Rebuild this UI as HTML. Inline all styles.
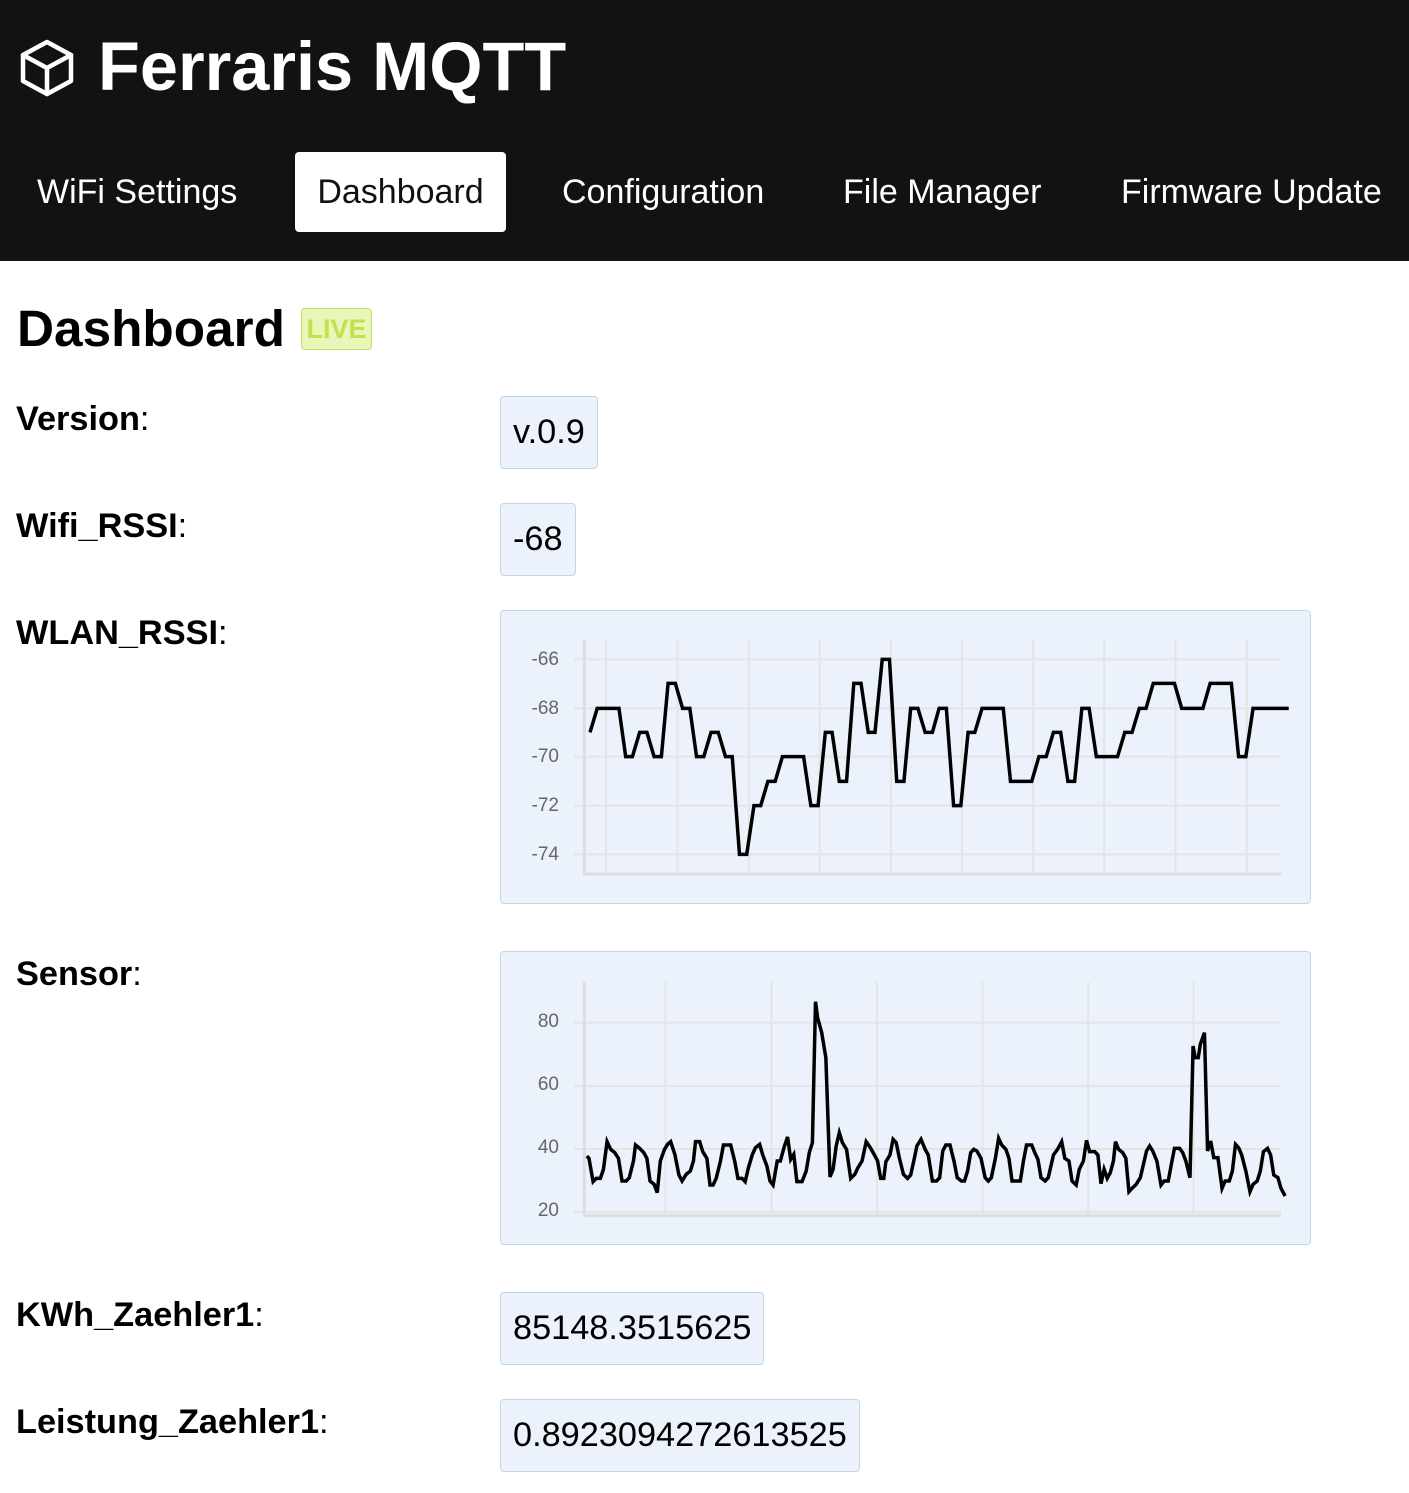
<!DOCTYPE html>
<html><head><meta charset="utf-8"><style>
*{margin:0;padding:0;box-sizing:border-box}
body{width:1409px;height:1493px;background:#fff;font-family:"Liberation Sans",sans-serif;position:relative;overflow:hidden;color:#000}
.hdr{position:absolute;left:0;top:0;width:1409px;height:261px;background:#121212}
.title{position:absolute;left:98px;top:27px;font-size:68.5px;font-weight:bold;color:#fff;line-height:80px}
.nav{position:absolute;top:152px;height:80px;line-height:80px;font-size:34px;color:#fff;white-space:nowrap}
.tab{background:#fff;color:#111;border-radius:4px;text-align:center}
h1{position:absolute;left:17px;top:300px;font-size:51.3px;font-weight:bold;line-height:58px}
.live{position:absolute;left:301px;top:308px;width:71px;height:42px;background:#e6f8b7;border:1px solid #c4e26a;border-radius:4px;color:#c4e04e;font-weight:bold;font-size:27px;line-height:40px;text-align:center}
.lbl{position:absolute;left:16px;font-size:34.3px;line-height:40px}
.lbl b{font-weight:bold}
.val{position:absolute;left:500px;height:73px;background:#ecf2fc;border:1px solid #c3d5e6;border-radius:4px;font-size:34.3px;line-height:71px;padding:0 12px}
.chart{position:absolute;left:500px;width:811px;height:294px;background:#ecf2fc;border:1px solid #c3d5e6;border-radius:4px}
.ax{position:absolute;font-size:19px;color:#666;width:58px;text-align:right}
</style></head><body>
<div class="hdr">
<svg style="position:absolute;left:20px;top:39px" width="54" height="58" viewBox="0 0 54 58" fill="none" stroke="#fff" stroke-width="4.5" stroke-linejoin="round" stroke-linecap="round">
<path d="M27 3 L51 16 L51 42 L27 55 L3 42 L3 16 Z"/><path d="M3 16 L27 29 L51 16"/><path d="M27 29 L27 55"/></svg>
<div class="title">Ferraris MQTT</div>
<div class="nav" style="left:37px">WiFi Settings</div>
<div class="nav tab" style="left:295px;width:211px">Dashboard</div>
<div class="nav" style="left:562px">Configuration</div>
<div class="nav" style="left:843px">File Manager</div>
<div class="nav" style="left:1121px">Firmware Update</div>
</div>
<h1>Dashboard</h1>
<div class="live">LIVE</div>

<div class="lbl" style="top:399px"><b>Version</b>:</div>
<div class="val" style="top:396px">v.0.9</div>
<div class="lbl" style="top:506px"><b>Wifi_RSSI</b>:</div>
<div class="val" style="top:503px">-68</div>
<div class="lbl" style="top:613px"><b>WLAN_RSSI</b>:</div>
<div class="chart" style="top:610px">
<div class="ax" style="left:0;top:38px">-66</div>
<div class="ax" style="left:0;top:87px">-68</div>
<div class="ax" style="left:0;top:135px">-70</div>
<div class="ax" style="left:0;top:184px">-72</div>
<div class="ax" style="left:0;top:233px">-74</div>
<svg style="position:absolute;left:-1px;top:-1px" width="811" height="294" viewBox="0 0 1568 882" preserveAspectRatio="none">
<g stroke="#e4e4e4" stroke-width="2" fill="none">
<path vector-effect="non-scaling-stroke" d="M205 90V792M343 90V792M481 90V792M618 90V792M756 90V792M893 90V792M1031 90V792M1168 90V792M1306 90V792M1444 90V792M143 148H1510M143 295H1510M143 440H1510M143 587H1510M143 733H1510"/>
<path vector-effect="non-scaling-stroke" stroke="#ddd" stroke-width="3" d="M163 90V792H1510"/>
</g>
<polyline vector-effect="non-scaling-stroke" fill="none" stroke="#000" stroke-width="3.5" points="174,367 188,295 230,295 243,440 256,440 270,367 284,367 298,440 312,440 325,220 339,220 353,295 367,295 380,440 394,440 408,367 422,367 436,440 449,440 463,733 477,733 491,587 504,587 518,514 532,514 546,440 587,440 601,587 615,587 629,367 642,367 656,514 670,514 684,220 698,220 712,367 725,367 739,148 753,148 767,514 781,514 794,295 808,295 822,367 836,367 849,295 863,295 877,587 891,587 905,367 918,367 932,295 973,295 987,514 1028,514 1042,440 1056,440 1070,367 1084,367 1098,514 1111,514 1125,295 1139,295 1153,440 1194,440 1208,367 1222,367 1236,295 1249,295 1263,220 1304,220 1318,295 1359,295 1373,220 1414,220 1428,440 1442,440 1456,295 1525,295"/>
</svg></div>

<div class="lbl" style="top:954px"><b>Sensor</b>:</div>
<div class="chart" style="top:951px">
<div class="ax" style="left:0;top:59px">80</div>
<div class="ax" style="left:0;top:122px">60</div>
<div class="ax" style="left:0;top:185px">40</div>
<div class="ax" style="left:0;top:248px">20</div>
<svg style="position:absolute;left:-1px;top:-1px" width="811" height="294" viewBox="0 0 1568 882" preserveAspectRatio="none">
<g stroke="#e4e4e4" stroke-width="2" fill="none">
<path vector-effect="non-scaling-stroke" d="M320 92V792M525 92V792M729 92V792M933 92V792M1137 92V792M1341 92V792M143 215H1510M143 405H1510M143 594H1510M143 783H1510"/>
<path vector-effect="non-scaling-stroke" stroke="#ddd" stroke-width="3" d="M163 92V794H1510"/>
</g>
<polyline vector-effect="non-scaling-stroke" fill="none" stroke="#000" stroke-width="3.5" points="168,615 172,622 180,692 186,682 194,682 200,655 207,572 214,595 222,605 229,622 236,690 244,690 250,680 258,630 262,582 270,592 278,605 284,622 290,690 298,700 304,725 310,630 318,595 324,580 330,572 338,610 346,672 352,690 360,670 368,660 374,630 378,572 386,572 392,602 400,622 406,702 412,702 418,682 426,632 432,582 446,582 454,632 460,682 468,682 474,692 480,652 488,610 494,590 502,580 508,612 516,645 522,690 528,702 536,630 542,630 550,585 556,558 562,625 568,610 574,692 584,692 592,660 598,605 604,575 610,152 614,200 622,245 630,320 638,678 644,655 650,585 656,545 662,575 670,595 678,682 686,670 692,650 700,630 708,572 716,590 724,612 730,630 736,682 742,682 746,632 754,612 760,565 766,575 772,620 780,670 788,682 794,672 800,630 806,585 814,565 822,595 828,612 836,690 844,690 850,680 856,600 862,582 870,582 878,632 884,680 892,690 898,690 904,660 910,605 916,595 922,600 930,622 938,680 944,690 950,680 958,620 964,562 970,582 978,595 984,622 990,690 1006,690 1012,630 1018,582 1028,582 1034,605 1040,625 1046,680 1054,690 1060,680 1070,612 1078,595 1086,572 1092,622 1100,630 1106,690 1114,702 1120,655 1128,630 1134,568 1140,602 1150,602 1156,612 1162,698 1168,655 1174,682 1180,665 1186,630 1190,572 1196,595 1204,605 1210,622 1216,722 1222,712 1230,700 1238,680 1244,640 1250,600 1256,585 1262,600 1270,630 1278,702 1284,690 1292,690 1298,640 1304,592 1314,592 1320,605 1326,630 1334,680 1340,285 1344,320 1350,320 1354,280 1362,245 1368,600 1374,570 1380,620 1388,620 1396,712 1402,690 1410,690 1416,660 1422,580 1428,590 1434,612 1442,660 1450,722 1456,700 1464,690 1470,660 1476,602 1484,592 1490,612 1496,672 1504,680 1510,712 1518,735"/>
</svg></div>

<div class="lbl" style="top:1295px"><b>KWh_Zaehler1</b>:</div>
<div class="val" style="top:1292px">85148.3515625</div>
<div class="lbl" style="top:1402px"><b>Leistung_Zaehler1</b>:</div>
<div class="val" style="top:1399px">0.8923094272613525</div>
</body></html>
